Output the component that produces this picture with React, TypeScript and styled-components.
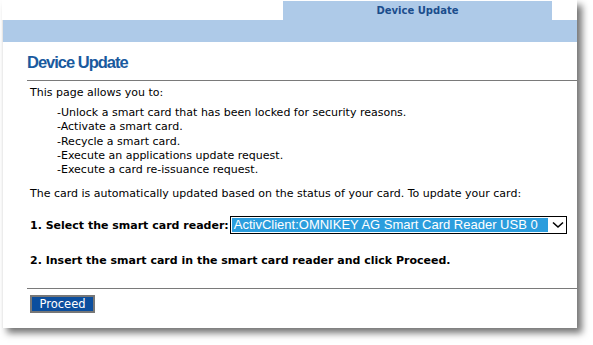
import React from "react";
import styled, { createGlobalStyle } from "styled-components";

const Global = createGlobalStyle`
  html, body { margin: 0; padding: 0; background: #ffffff; }
  body { font-family: "DejaVu Sans", Verdana, sans-serif; }
`;

const Stage = styled.div`
  width: 593px;
  height: 345px;
  padding: 0 0 0 2px;
  box-sizing: border-box;
`;

const Window = styled.div`
  width: 575px;
  height: 328px;
  background: #ffffff;
  box-shadow: 5px 5px 7px rgba(0, 0, 0, 0.55);
  display: flex;
  flex-direction: column;
`;

const TabRow = styled.div`
  height: 20px;
  display: flex;
  padding-left: 281px;
  padding-top: 1px;
  box-sizing: border-box;
`;

const Tab = styled.div`
  width: 269px;
  background: #aecae8;
  display: flex;
  align-items: center;
  justify-content: center;
  font-family: "DejaVu Sans", Verdana, sans-serif;
  font-weight: bold;
  font-size: 10px;
  color: #1b4d8c;
  padding-bottom: 1px;
  box-sizing: border-box;
`;

const Bar = styled.div`
  height: 22px;
  background: #aecae8;
  border-left: 1px solid #e6e6e6;
`;

const Body = styled.div`
  flex: 1;
  border-left: 1px solid #ececec;
  padding: 10px 0 0 24px;
  display: flex;
  flex-direction: column;
`;

const Title = styled.h1`
  margin: 0;
  font-family: "Liberation Sans", Arial, sans-serif;
  font-size: 16.5px;
  letter-spacing: -1px;
  line-height: 20px;
  font-weight: bold;
  color: #1a5a9e;
  padding-bottom: 8px;
  border-bottom: 1px solid #7a7a7a;
`;

const Inner = styled.div`
  padding-left: 3px;
  display: flex;
  flex-direction: column;
`;

const Text = styled.p<{ $gap: number }>`
  margin: ${(p) => p.$gap}px 0 0 0;
  font-size: 11px;
  line-height: 14px;
  color: #000;
`;

const List = styled.ul`
  list-style: none;
  margin: 6px 0 0 0;
  padding: 0 0 0 27px;
  font-size: 11px;
  line-height: 14.3px;
  color: #000;
`;

const Step = styled.div<{ $gap: number }>`
  margin-top: ${(p) => p.$gap}px;
  display: flex;
  align-items: center;
  gap: 1px;
  height: 18px;
  font-size: 11px;
  font-weight: bold;
  color: #000;
`;

const Select = styled.div`
  width: 337px;
  height: 18px;
  box-sizing: border-box;
  border: 1px solid #000;
  background: #fff;
  display: flex;
  align-items: center;
  padding: 1px 2px 1px 1px;
  gap: 4px;
`;

const Selected = styled.span`
  background: #2b9ddd;
  color: #fff;
  font-family: "Liberation Sans", Arial, sans-serif;
  font-weight: normal;
  font-size: 13px;
  line-height: 14px;
  padding: 0 2px 0 2px;
  white-space: nowrap;
  overflow: hidden;
  flex: 1;
`;

const Rule = styled.div`
  margin-top: 19px;
  border-top: 1px solid #7a7a7a;
`;

const Button = styled.button`
  margin-top: 6px;
  align-self: flex-start;
  width: 65px;
  height: 18px;
  box-sizing: border-box;
  border: 2px solid #777;
  background: #0b4e9e;
  color: #fff;
  font-family: "DejaVu Sans", Verdana, sans-serif;
  font-size: 11.5px;
  line-height: 12px;
  padding: 0;
`;

const items = [
  "-Unlock a smart card that has been locked for security reasons.",
  "-Activate a smart card.",
  "-Recycle a smart card.",
  "-Execute an applications update request.",
  "-Execute a card re-issuance request.",
];

export default function App() {
  return (
    <Stage>
      <Global />
      <Window>
        <TabRow>
          <Tab>Device Update</Tab>
        </TabRow>
        <Bar />
        <Body>
          <Title>Device Update</Title>
          <Inner>
            <Text $gap={5}>This page allows you to:</Text>
            <List>
              {items.map((t) => (
                <li key={t}>{t}</li>
              ))}
            </List>
            <Text $gap={10}>
              The card is automatically updated based on the status of your card. To update your card:
            </Text>
            <Step $gap={15}>
              <span>1. Select the smart card reader:</span>
              <Select role="combobox">
                <Selected>ActivClient:OMNIKEY AG Smart Card Reader USB 0</Selected>
                <svg width="12" height="8" viewBox="0 0 12 8">
                  <path d="M1 1.5 L6 6 L11 1.5" fill="none" stroke="#000" strokeWidth="1.6" />
                </svg>
              </Select>
            </Step>
            <Step $gap={17}>2. Insert the smart card in the smart card reader and click Proceed.</Step>
          </Inner>
          <Rule />
          <Inner>
            <Button>Proceed</Button>
          </Inner>
        </Body>
      </Window>
    </Stage>
  );
}
